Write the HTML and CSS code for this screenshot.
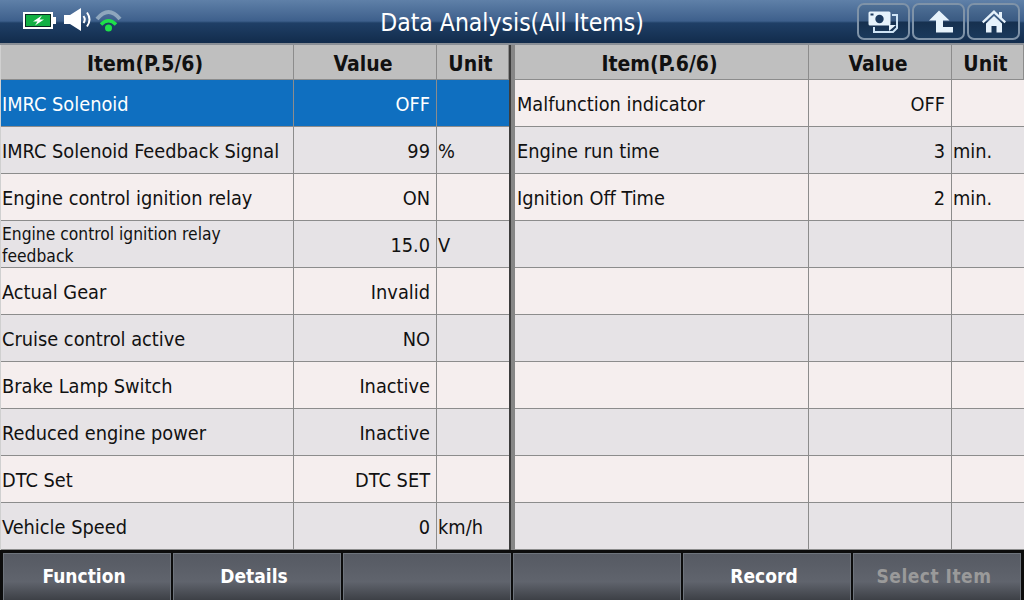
FILE: index.html
```html
<!DOCTYPE html>
<html lang="en">
<head>
<meta charset="utf-8">
<title>Data Analysis(All Items)</title>
<link rel="stylesheet" href="styles.css">
</head>
<body>
<div class="screen">
  <header class="topbar">
    <div class="status">
      <svg class="ico-batt" width="33" height="17" viewBox="0 0 33 17"><rect x="1" y="1" width="28" height="15" fill="#0a2a22" stroke="#fff" stroke-width="2"/><rect x="3" y="3" width="24" height="11" fill="#13b044"/><rect x="30" y="5" width="3" height="7" fill="#fff"/><path d="M19 3.500 10 9.500h4.500L12 13.500l9-6h-4.500z" fill="#fff"/></svg>
      <svg class="ico-vol" width="27" height="23" viewBox="0 0 27 23"><path d="M0 7h6l11-7v23L6 16H0z" fill="#fff"/><path d="M19.500 8q2.500 3.500 0 7M23 4.500q5 7 0 14" fill="none" stroke="#fff" stroke-width="2"/></svg>
      <svg class="ico-wifi" width="27" height="23" viewBox="0 0 27 23"><path d="M2 10Q13.500-4 25 10" fill="none" stroke="#8ea6bd" stroke-width="4"/><path d="M6 15.500q7.500-7.500 15 0" fill="none" stroke="#1fe04a" stroke-width="3.500"/><circle cx="13.500" cy="19" r="3.500" fill="#1fe04a"/></svg>
    </div>
    <h1 class="title">Data Analysis(All Items)</h1>
    <div class="actions">
      <button class="tool"><svg width="32" height="26" viewBox="0 0 32 26"><path d="M24 6h5v13l-4 4H6v-5" fill="none" stroke="#cfe4f5" stroke-width="2"/><path d="M21 22v-6h7z" fill="#e6f2fb"/><rect x=".5" y="2.500" width="22" height="14" rx="1.500" fill="#e6f2fb"/><circle cx="11.500" cy="10" r="4.200" fill="#1c3a5e"/><rect x="2.500" y="4.500" width="3" height="2" fill="#1c3a5e"/></svg></button>
      <button class="tool"><svg width="28" height="26" viewBox="0 0 28 26"><path d="M14 1.500 4 11.500h7v12h17.500V18H18v-6.500h6.500z" fill="#e6f2fb"/></svg></button>
      <button class="tool"><svg width="28" height="26" viewBox="0 0 28 26"><path d="M14 1 2 12.500l1.500 1.700L14 4.500l10.500 9.700 1.500-1.700-4-3.800V3h-3v3z" fill="#e6f2fb"/><path d="M6 14.500 14 7l8 7.500v9h-5.500V17h-5v6.500H6z" fill="#e6f2fb"/></svg></button>
    </div>
  </header>
  <main class="tables">
    <section class="grid">
      <div class="cell head">Item(P.5/6)</div><div class="cell head">Value</div><div class="cell head">Unit</div>
      <div class="cell name sel">IMRC Solenoid</div><div class="cell val sel">OFF</div><div class="cell unit sel"></div>
      <div class="cell name even">IMRC Solenoid Feedback Signal</div><div class="cell val even">99</div><div class="cell unit even">%</div>
      <div class="cell name odd">Engine control ignition relay</div><div class="cell val odd">ON</div><div class="cell unit odd"></div>
      <div class="cell name even small">Engine control ignition relay feedback</div><div class="cell val even">15.0</div><div class="cell unit even">V</div>
      <div class="cell name odd">Actual Gear</div><div class="cell val odd">Invalid</div><div class="cell unit odd"></div>
      <div class="cell name even">Cruise control active</div><div class="cell val even">NO</div><div class="cell unit even"></div>
      <div class="cell name odd">Brake Lamp Switch</div><div class="cell val odd">Inactive</div><div class="cell unit odd"></div>
      <div class="cell name even">Reduced engine power</div><div class="cell val even">Inactive</div><div class="cell unit even"></div>
      <div class="cell name odd">DTC Set</div><div class="cell val odd">DTC SET</div><div class="cell unit odd"></div>
      <div class="cell name even">Vehicle Speed</div><div class="cell val even">0</div><div class="cell unit even">km/h</div>
    </section>
    <div class="divider"></div>
    <section class="grid right">
      <div class="cell head">Item(P.6/6)</div><div class="cell head">Value</div><div class="cell head">Unit</div>
      <div class="cell name odd">Malfunction indicator</div><div class="cell val odd">OFF</div><div class="cell unit odd"></div>
      <div class="cell name even">Engine run time</div><div class="cell val even">3</div><div class="cell unit even">min.</div>
      <div class="cell name odd">Ignition Off Time</div><div class="cell val odd">2</div><div class="cell unit odd">min.</div>
      <div class="cell name even"></div><div class="cell val even"></div><div class="cell unit even"></div>
      <div class="cell name odd"></div><div class="cell val odd"></div><div class="cell unit odd"></div>
      <div class="cell name even"></div><div class="cell val even"></div><div class="cell unit even"></div>
      <div class="cell name odd"></div><div class="cell val odd"></div><div class="cell unit odd"></div>
      <div class="cell name even"></div><div class="cell val even"></div><div class="cell unit even"></div>
      <div class="cell name odd"></div><div class="cell val odd"></div><div class="cell unit odd"></div>
      <div class="cell name even"></div><div class="cell val even"></div><div class="cell unit even"></div>
    </section>
  </main>
  <footer class="bottombar">
    <button class="fn">Function</button>
    <button class="fn">Details</button>
    <button class="fn"></button>
    <button class="fn"></button>
    <button class="fn">Record</button>
    <button class="fn off">Select Item</button>
  </footer>
</div>
</body>
</html>
```
FILE: styles.css
```css
* { box-sizing: border-box; }
html, body { margin: 0; padding: 0; }
body { width: 1024px; height: 600px; overflow: hidden; background: #000; font-family: "DejaVu Sans Condensed", "DejaVu Sans", sans-serif; }
.screen { width: 1024px; height: 600px; display: flex; flex-direction: column; }

.topbar { height: 45px; flex: none; display: grid; grid-template-columns: 1fr auto 1fr; align-items: center; background: linear-gradient(#5f80a8 0, #3e608c 21px, #1f3f66 23px, #122c4c 43px, #8a8f96 43px, #8a8f96 45px); }
.status { display: flex; align-items: flex-start; padding: 8px 0 0 23px; gap: 8px; height: 45px; }
.ico-batt { margin-top: 4px; }
.ico-wifi { margin: 1px 0 0 -4px; }
.title { margin: 0; color: #fff; font: 400 24.500px "DejaVu Sans Condensed", "DejaVu Sans", sans-serif; }
.actions { display: flex; justify-content: flex-end; gap: 2px; padding: 0 4px 2px 0; }
.tool { width: 53px; height: 37px; padding: 0; display: flex; align-items: center; justify-content: center; border: 2px solid #7f93a8; border-radius: 7px; background: linear-gradient(#4f7096 0, #3a5a82 48%, #16304f 52%, #1b3a5c 100%); }

.tables { flex: none; height: 505px; display: flex; background: #fff; }
.grid { width: 509px; padding-left: 1px; background: #d0d0d0; display: grid; grid-template-columns: 293px 143px 72px; grid-template-rows: 35px repeat(10, 47px); }
.divider { width: 6px; background: linear-gradient(90deg, #3c3c3c 2px, #868686 2px); }
.right { flex: 1; padding-left: 0; grid-template-columns: 294px 143px 72px; }

.cell { display: flex; align-items: center; padding: 3px 2px 0; color: #111; font: 400 19.800px/22px "DejaVu Sans Condensed", "DejaVu Sans", sans-serif; border-right: 1px solid #8c8c8c; border-bottom: 1px solid #8c8c8c; }
.name { padding-left: 1px; }
.right .name { padding-left: 2px; }
.unit { border-right: 0; padding-left: 1px; }
.head { justify-content: center; padding: 3px 4px 0 0; background: #bfbfbf; font-weight: 700; font-size: 21px; }
.val { justify-content: flex-end; padding-right: 6px; }
.odd { background: #f5eeee; }
.even { background: #e6e3e6; }
.sel { background: #0f6fc0; color: #fff; }
.small { font-size: 17.300px; line-height: 22px; padding-top: 1px; }

.bottombar { height: 50px; flex: none; display: flex; gap: 2px; padding: 3px 3px 0; background: #0c0c0c; }
.fn { flex: 1; height: 47px; padding: 0 6px 2px 0; border: 1px solid #6e747c; border-bottom: 0; background: linear-gradient(#565a63, #60646d 60%, #3d4046); color: #fff; font: 700 19px "DejaVu Sans Condensed", "DejaVu Sans", sans-serif; }
.off { color: #9a9a9a; letter-spacing: .5px; }
```
